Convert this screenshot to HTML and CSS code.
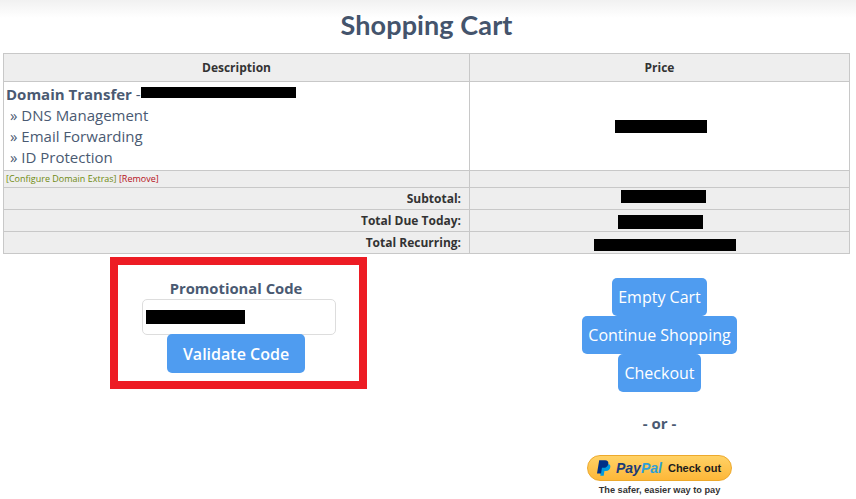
FILE: index.html
```html
<!DOCTYPE html>
<html>
<head>
  <meta charset="utf-8">
  <title>Shopping Cart</title>
  <link rel="stylesheet" href="styles.css">
</head>
<body>
  <h1 class="title">Shopping Cart</h1>
  <table class="cart">
    <tr class="head">
      <th class="col-desc">Description</th>
      <th>Price</th>
    </tr>
    <tr class="item">
      <td>
        <div class="item-name"><strong>Domain Transfer</strong> -<span class="redact redact-name"></span></div>
        <div class="addon">&raquo; DNS Management</div>
        <div class="addon">&raquo; Email Forwarding</div>
        <div class="addon">&raquo; ID Protection</div>
      </td>
      <td class="amount"><span class="redact redact-price"></span></td>
    </tr>
    <tr class="links">
      <td><a class="configure" href="#">[Configure Domain Extras]</a> <a class="remove" href="#">[Remove]</a></td>
      <td></td>
    </tr>
    <tr class="total">
      <td>Subtotal:</td>
      <td class="amount"><span class="redact redact-sub"></span></td>
    </tr>
    <tr class="total">
      <td>Total Due Today:</td>
      <td class="amount"><span class="redact redact-due"></span></td>
    </tr>
    <tr class="total">
      <td>Total Recurring:</td>
      <td class="amount"><span class="redact redact-rec"></span></td>
    </tr>
  </table>

  <div class="below">
    <form class="promo">
      <div class="marker"></div>
      <div class="promo-label">Promotional Code</div>
      <div class="promo-input"><span class="redact redact-code"></span></div>
      <button class="btn btn-strong" type="button">Validate Code</button>
    </form>
    <div class="actions">
      <button class="btn" type="button">Empty Cart</button>
      <button class="btn" type="button">Continue Shopping</button>
      <button class="btn" type="button">Checkout</button>
      <div class="or">- or -</div>
      <div class="paypal">
        <svg class="pp-mark" viewBox="1 1 19 21" width="14" height="16">
          <path fill="#009cde" d="M7 6h8.500c2.600 0 4 1.700 3.600 4.200-.5 3.400-2.900 5.300-6 5.300h-2l-1 6.500H5.500z"/>
          <path fill="#003087" d="M4 1h8c3 0 4.900 1.700 4.400 4.600-.6 3.600-3.100 5.700-6.500 5.700H7.700L6.500 19H1z"/>
        </svg>
        <span class="pp-word"><span class="pp-dark">Pay</span><span class="pp-light">Pal</span></span>
        <span class="pp-check">Check out</span>
      </div>
      <div class="pp-note">The safer, easier way to pay</div>
    </div>
  </div>
</body>
</html>
```

FILE: styles.css
```css
html, body {
  margin: 0;
  padding: 0;
}

body {
  height: 499px;
  overflow: hidden;
  padding: 0 6px 0 3px;
  box-sizing: border-box;
  background: linear-gradient(#f1f1f1 0, #ffffff 18px);
  font-family: "Open Sans", sans-serif;
  color: #4a5a72;
}

.title {
  margin: 0;
  height: 53px;
  line-height: 49px;
  text-align: center;
  font-family: "Lato", sans-serif;
  font-size: 27px;
  font-weight: 700;
  letter-spacing: 0.1px;
  color: #44546c;
}

.cart {
  width: 847px;
  border-collapse: collapse;
  table-layout: fixed;
  border: 1px solid #c8c8c8;
  font-size: 11px;
  color: #333;
}

.cart th, .cart td {
  border: 1px solid #c8c8c8;
  padding: 0 3px;
}

.col-desc {
  width: 459px;
}

.head th {
  height: 27px;
  background: #eeeeee;
  font-weight: 700;
  font-size: 12px;
}

.item td {
  height: 88px;
  background: #fff;
  color: #4a5a72;
}

.cart .item td:first-child {
  padding-left: 2px;
}

.item-name {
  font-size: 15px;
  line-height: 21px;
}

.item-name strong {
  font-weight: 700;
}

.addon {
  font-size: 15px;
  line-height: 21px;
  padding-left: 4px;
}

.cart .links td {
  height: 16px;
  background: #eeeeee;
  font-size: 9px;
  line-height: 16px;
  padding: 0 2px;
}

.configure {
  color: #6f8a10;
  text-decoration: none;
}

.remove {
  color: #b5121b;
  text-decoration: none;
}

.cart .total td {
  height: 21px;
  background: #eeeeee;
  text-align: right;
  font-weight: 700;
  font-size: 12px;
  padding: 0 8px 0 3px;
}

.cart .total .amount, .cart .amount {
  text-align: center;
  padding: 0;
}

.redact {
  display: inline-block;
  background: #000;
  vertical-align: middle;
}

.redact-name {
  width: 155px;
  height: 11px;
  margin-top: -6px;
}

.redact-price {
  width: 92px;
  height: 13px;
  margin: -2px 0 0 2px;
}

.redact-sub {
  width: 85px;
  height: 13px;
  margin: -6px 0 0 8px;
}

.redact-due {
  width: 85px;
  height: 14px;
  margin-left: 2px;
}

.redact-rec {
  width: 142px;
  height: 12px;
  margin: 3px 0 0 10px;
}

.redact-code {
  width: 99px;
  height: 14px;
}

.below {
  display: flex;
  width: 847px;
}

.promo {
  position: relative;
  width: 466px;
  padding-top: 24px;
  display: flex;
  flex-direction: column;
  align-items: center;
}

.marker {
  position: absolute;
  left: 107px;
  top: 3px;
  width: 241px;
  height: 116px;
  border: 8px solid #ed1c24;
}

.promo-label {
  font-size: 14.800px;
  font-weight: 700;
  line-height: 21px;
}

.promo-input {
  width: 194px;
  height: 36px;
  margin-left: 6px;
  box-sizing: border-box;
  border: 1px solid #dddddd;
  border-radius: 5px;
  padding: 10px 3px 0;
  line-height: 0;
}

.btn {
  display: block;
  height: 38px;
  padding: 0 6px;
  border: 0;
  border-radius: 5px;
  background: #4f9cf0;
  color: #fff;
  font-family: "Open Sans", sans-serif;
  font-size: 16px;
}

.btn-strong {
  height: 39px;
  margin-top: -1px;
  padding: 0 16px;
  font-weight: 600;
}

.actions {
  flex: 1;
  padding-top: 24px;
  display: flex;
  flex-direction: column;
  align-items: center;
}

.or {
  margin-top: 21px;
  font-size: 15px;
  font-weight: 700;
  line-height: 20px;
}

.paypal {
  width: 145px;
  height: 26px;
  margin-top: 22px;
  box-sizing: border-box;
  padding-left: 9px;
  display: flex;
  align-items: center;
  border: 1px solid #eda92c;
  border-radius: 13px;
  background: linear-gradient(#ffd266, #fdb738);
  font-family: "Liberation Sans", sans-serif;
  font-weight: 700;
}

.pp-mark {
  flex: none;
}

.pp-word {
  margin-left: 5px;
  font-size: 14px;
  font-style: italic;
}

.pp-dark {
  color: #1b3a78;
}

.pp-light {
  color: #2e9fd8;
}

.pp-check {
  margin-left: 6px;
  font-size: 11px;
  color: #1c1c1c;
}

.pp-note {
  margin-top: 3px;
  font-family: "Liberation Sans", sans-serif;
  font-size: 9.200px;
  font-weight: 700;
  line-height: 12px;
  color: #333;
}
```
